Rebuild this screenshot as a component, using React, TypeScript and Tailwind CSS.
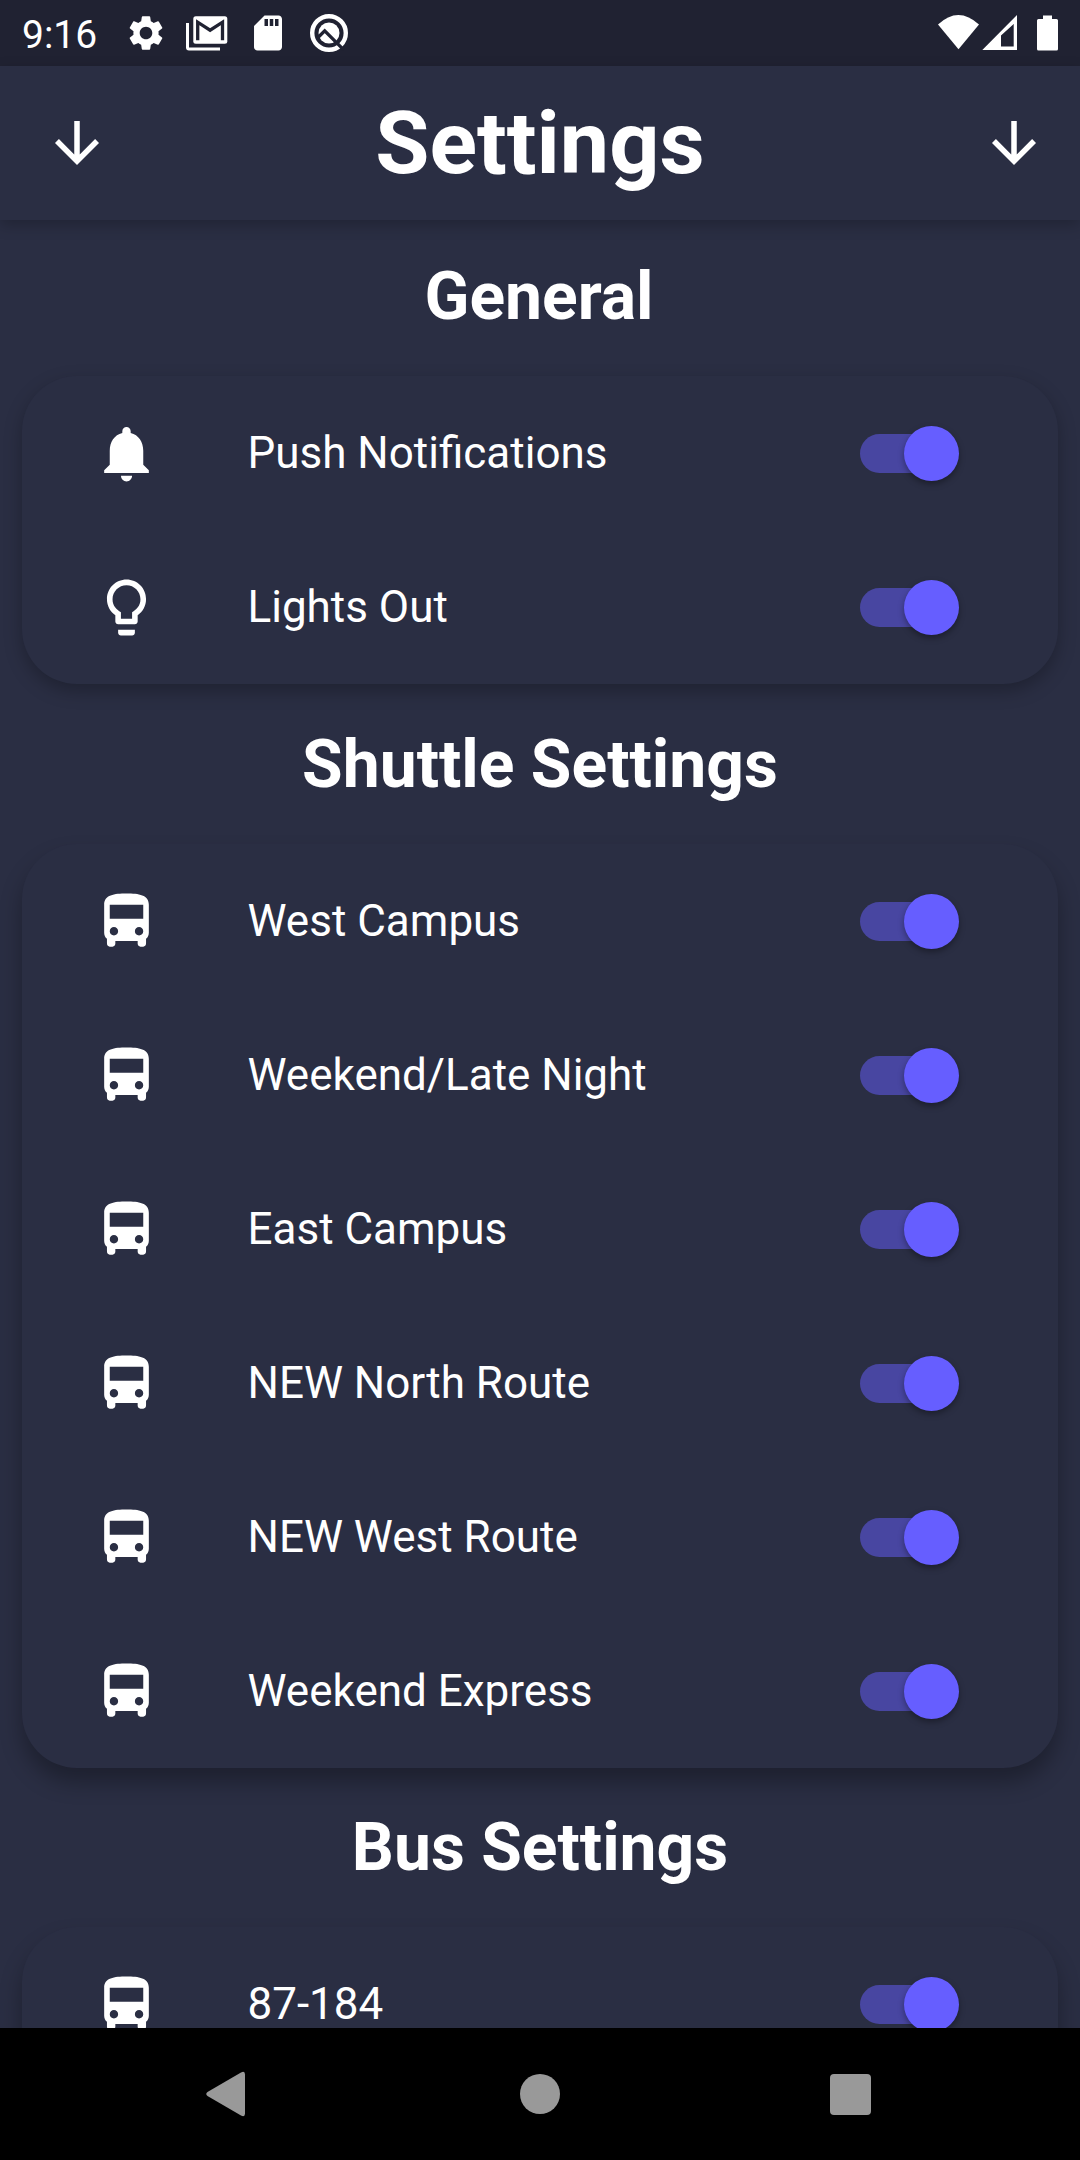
import React from "react";
import {
  MdArrowDownward,
  MdDirectionsBus,
  MdLightbulbOutline,
  MdNotifications,
  MdSdCard,
  MdSettings,
} from "react-icons/md";

type IconType = React.ComponentType<{ className?: string }>;

interface SettingItem {
  label: string;
  icon: IconType;
}

const general: SettingItem[] = [
  { label: "Push Notifications", icon: MdNotifications },
  { label: "Lights Out", icon: MdLightbulbOutline },
];

const shuttles: SettingItem[] = [
  "West Campus",
  "Weekend/Late Night",
  "East Campus",
  "NEW North Route",
  "NEW West Route",
  "Weekend Express",
].map((label) => ({ label, icon: MdDirectionsBus }));

const buses: SettingItem[] = [{ label: "87-184", icon: MdDirectionsBus }];

function StatusBar() {
  return (
    <div className="flex h-[66px] shrink-0 items-center bg-[#202232] pl-[22px]">
      <span className="w-[75px] pt-[4px] text-[39px] leading-none">9:16</span>
      <MdSettings className="ml-[28px] size-[42px]" />
      <svg className="ml-[19px] h-[36px] w-[42px]" viewBox="0 0 42 36" fill="none">
        <path d="M1.5 8v24.500q0 1.500 1.500 1.500h31" stroke="#fff" strokeWidth="3" />
        <rect x="7.300" y="1.200" width="34" height="27.500" rx="2.500" fill="#fff" />
        <path d="M11.700 25.300V7.200l12.400 8 12.400-8v18.100" stroke="#202232" strokeWidth="3.300" />
      </svg>
      <MdSdCard className="ml-[19px] size-[42px]" />
      <svg className="ml-[20px] size-[40px]" viewBox="0 0 40 40" fill="none">
        <circle cx="20" cy="20" r="16.800" stroke="#fff" strokeWidth="4.400" />
        <circle cx="20" cy="20" r="10.500" fill="#fff" />
        <path d="M8.500 25l7.200-7.200L34.500 36.600" stroke="#202232" strokeWidth="3.300" />
      </svg>
      <svg className="ml-auto h-[36px] w-[142px]" viewBox="0 0 142 36" fill="#fff">
        <path d="M0 9.500Q20.300 -9.500 41 9.500L20.500 34.300z" />
        <path fillRule="evenodd" d="M44.300 35L79 0v35zM63 20.500V31.500H75.700V9z" />
        <path d="M105 0.500h9v3.500h4.500q1.500 0 1.500 1.500v28.500q0 1.500-1.500 1.500h-18q-1.500 0-1.500-1.500V5.500q0-1.500 1.500-1.500H105z" />
      </svg>
    </div>
  );
}

function AppBar() {
  return (
    <header className="relative z-10 flex h-[154px] shrink-0 items-center bg-[#2A2E43] pr-[33px] pl-[44px] shadow-[0_5px_14px_rgba(0,0,0,0.22)]">
      <MdArrowDownward className="size-[66px]" />
      <h1 className="flex-1 pr-[11px] text-center text-[88px] leading-none font-bold">Settings</h1>
      <MdArrowDownward className="size-[66px]" />
    </header>
  );
}

function Toggle() {
  return (
    <div className="mr-[99px] flex h-[55px] w-[99px] items-center">
      <div className="h-[39px] w-[91px] shrink-0 rounded-full bg-[#4846A1]" />
      <div className="z-10 -ml-[47px] size-[55px] shrink-0 rounded-full bg-[#665EFF] shadow-[0_3px_6px_rgba(0,0,0,0.35)]" />
    </div>
  );
}

interface SectionProps {
  title: string;
  items: SettingItem[];
  headingClass: string;
  shadowClass: string;
}

function Section({ title, items, headingClass, shadowClass }: SectionProps) {
  return (
    <section>
      <h2 className={`flex items-center justify-center text-[66px] leading-none font-bold ${headingClass}`}>
        {title}
      </h2>
      <div className={`mx-[22px] rounded-[55px] bg-[#2A2E43] ${shadowClass}`}>
        {items.map(({ label, icon: Icon }) => (
          <div key={label} className="flex h-[154px] items-center">
            <Icon className="ml-[71px] size-[67px]" />
            <span className="ml-[87.500px] flex-1 text-[44px] leading-[52px]">{label}</span>
            <Toggle />
          </div>
        ))}
      </div>
    </section>
  );
}

function NavBar() {
  return (
    <nav className="relative z-10 flex h-[132px] shrink-0 items-center bg-black text-[#999999]">
      <svg className="ml-[205px] h-[46px] w-[42px]" viewBox="0 0 42 46" fill="currentColor">
        <path d="M2.500 21L36 1.500Q40 -0.500 40 3.500V42.500Q40 46.500 36 44.500L2.500 25Q0 23 2.500 21z" />
      </svg>
      <div className="ml-[273px] size-[40px] rounded-full bg-[#999999]" />
      <div className="ml-[270px] size-[41px] rounded-[4px] bg-[#999999]" />
    </nav>
  );
}

export default function App() {
  return (
    <div className="flex h-[2160px] w-[1080px] flex-col overflow-hidden bg-[#2A2E43] font-['Roboto',sans-serif] text-white">
      <StatusBar />
      <AppBar />
      <main className="min-h-0 flex-1 overflow-hidden">
        <Section
          title="General"
          items={general}
          headingClass="h-[156px] pr-[2px] pb-[3px]"
          shadowClass="shadow-[0_7px_18px_rgba(0,0,0,0.26)]"
        />
        <Section
          title="Shuttle Settings"
          items={shuttles}
          headingClass="h-[160px] pt-[1px]"
          shadowClass="shadow-[0_14px_22px_rgba(0,0,0,0.3)]"
        />
        <Section
          title="Bus Settings"
          items={buses}
          headingClass="h-[159px]"
          shadowClass="shadow-[0_14px_22px_rgba(0,0,0,0.3)]"
        />
      </main>
      <NavBar />
    </div>
  );
}
